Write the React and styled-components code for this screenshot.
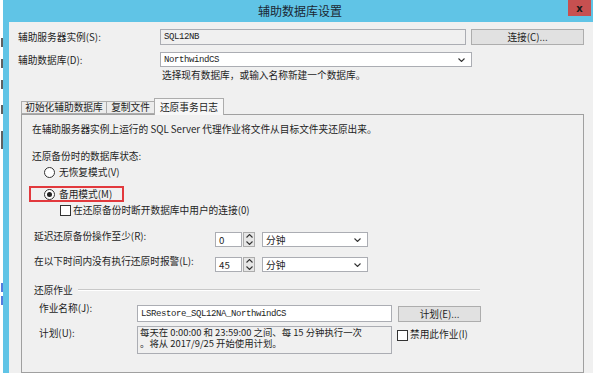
import React from 'react'
import styled, { createGlobalStyle } from 'styled-components'

const FRAME = '#60c4e6'
const FIELD_BORDER = '#abadb3'

const GlobalStyle = createGlobalStyle`
  html, body { margin: 0; padding: 0; background: #fff; }
  body {
    font-family: "Noto Sans CJK SC", "Noto Sans", sans-serif;
    font-size: 9.7px;
    color: #1e1e1e;
  }
  * { box-sizing: border-box; }
`

const Screen = styled.div`
  width: 593px;
  height: 373px;
  overflow: hidden;
  display: flex;
`

/* sliver of the window behind the dialog */
const Behind = styled.div`
  width: 3px;
  flex: none;
  background: #fff;
  display: flex;
  flex-direction: column;
  align-items: flex-end;
`

const Mark = styled.span`
  display: block;
  margin-top: ${p => p.$gap}px;
  width: 2px;
  height: ${p => p.$h || 9}px;
  background: ${p => p.$color || '#3a3a3a'};
  opacity: 0.8;
`

const Window = styled.div`
  flex: 1;
  display: flex;
  flex-direction: column;
  border-left: 6px solid ${FRAME};
`

const TitleBar = styled.div`
  height: 22px;
  flex: none;
  display: flex;
  align-items: flex-start;
  background: ${FRAME};
`

const Title = styled.div`
  margin-left: 249px;
  line-height: 22px;
  font-size: 12px;
  color: #1b2733;
`

const CloseButton = styled.div`
  margin-left: auto;
  margin-right: 2px;
  width: 23px;
  height: 16px;
  background: #c75050;
  display: flex;
  align-items: center;
  justify-content: center;
  font-family: "DejaVu Sans", sans-serif;
  font-weight: bold;
  font-size: 10px;
  color: #1a1a1a;
`

const Body = styled.div`
  flex: 1;
  background: #f0f0f0;
  padding: 7px 0 0 9px;
  display: flex;
  flex-direction: column;
`

const Row = styled.div`
  display: flex;
  align-items: ${p => p.$align || 'center'};
  margin-top: ${p => p.$top || 0}px;
  margin-left: ${p => p.$left || 0}px;
  height: ${p => (p.$h ? `${p.$h}px` : 'auto')};
`

const Label = styled.div`
  width: ${p => p.$w}px;
  flex: none;
  line-height: 12px;
  margin-top: ${p => p.$top || 0}px;
  white-space: nowrap;
`

const TextBox = styled.div`
  width: ${p => p.$w}px;
  height: ${p => p.$h || 16}px;
  margin-top: ${p => p.$top || 0}px;
  flex: none;
  border: 1px solid ${FIELD_BORDER};
  background: ${p => (p.$readOnly ? '#f0f0f0' : '#fff')};
  display: flex;
  align-items: center;
  padding-left: 3px;
  font-family: ${p => (p.$mono ? '"Liberation Mono", monospace' : 'inherit')};
  font-size: ${p => (p.$mono ? '9px' : 'inherit')};
  letter-spacing: ${p => (p.$mono ? '-0.4px' : '0')};
  white-space: nowrap;
`

const Combo = styled(TextBox)`
  justify-content: space-between;
  padding-right: 6px;
`

const UnitCombo = styled(Combo)`
  margin-left: 7px;
`

const Button = styled.div`
  width: ${p => p.$w}px;
  height: 16px;
  margin-left: ${p => p.$left || 0}px;
  margin-top: ${p => p.$top || 0}px;
  flex: none;
  background: #e1e1e1;
  border: 1px solid #adadad;
  display: flex;
  align-items: center;
  justify-content: center;
  white-space: nowrap;
`

const Hint = styled.div`
  margin: 2px 0 0 144px;
  line-height: 12px;
`

const TabArea = styled.div`
  margin: 16px 0 0 3px;
  width: 563px;
  flex: 1;
  display: flex;
  flex-direction: column;
`

const TabStrip = styled.div`
  height: 17px;
  display: flex;
  align-items: flex-end;
  position: relative;
  z-index: 1;
`

const Tab = styled.div`
  width: ${p => p.$w}px;
  height: ${p => (p.$active ? 17 : 13)}px;
  margin-left: ${p => (p.$first ? 0 : -1)}px;
  margin-bottom: ${p => (p.$active ? -1 : 0)}px;
  border: 1px solid #acacac;
  border-bottom: ${p => (p.$active ? 'none' : '1px solid #acacac')};
  background: ${p => (p.$active ? '#f7f7f7' : '#ececec')};
  display: flex;
  align-items: center;
  justify-content: center;
  white-space: nowrap;
  line-height: 11px;
`

const Panel = styled.div`
  flex: 1;
  border: 1px solid #a0a0a0;
  background: #f0f0f0;
  padding: 8px 0 0 10px;
  display: flex;
  flex-direction: column;
`

const Line = styled.div`
  height: 12px;
  line-height: 12px;
  margin-top: ${p => p.$top || 0}px;
  white-space: nowrap;
`

const RadioCircle = styled.span`
  width: 11px;
  height: 11px;
  flex: none;
  border-radius: 50%;
  border: 1px solid #333;
  background: #fff;
  margin-right: 4px;
  display: flex;
  align-items: center;
  justify-content: center;
  &::after {
    content: '';
    width: 5px;
    height: 5px;
    border-radius: 50%;
    background: ${p => (p.$checked ? '#222' : 'transparent')};
  }
`

const Highlight = styled.div`
  margin: 8px 0 0 -3px;
  width: 95px;
  height: 16px;
  border: 2px solid #e2393d;
  padding-left: 13px;
  display: flex;
  align-items: center;
  line-height: 12px;
`

const CheckBox = styled.span`
  width: 11px;
  height: 11px;
  flex: none;
  border: 1px solid #333;
  background: #fff;
  margin-right: 2px;
  margin-top: ${p => p.$top || 0}px;
`

const SpinWrap = styled.div`
  display: flex;
  margin-top: 2px;
`

const SpinButtons = styled.div`
  width: 12px;
  height: 15px;
  margin-left: 1px;
  border: 1px solid #acacac;
  background: #e6e6e6;
  display: flex;
  flex-direction: column;
  justify-content: space-around;
  align-items: center;
`

const GroupHeader = styled.div`
  margin: 12px 0 0 2px;
  width: 446px;
  height: 12px;
  display: flex;
  align-items: center;
  line-height: 12px;
  &::after {
    content: '';
    flex: 1;
    margin-left: 5px;
    border-top: 1px solid #c8c8c8;
    border-bottom: 1px solid #fff;
  }
`

const Schedule = styled.div`
  width: 255px;
  height: 28px;
  flex: none;
  border: 1px solid ${FIELD_BORDER};
  background: #f0f0f0;
  padding: 0 2px;
  font-size: 9.4px;
  line-height: 11px;
  white-space: nowrap;
`

const Chevron = ({ up }) => (
  <svg width="7" height="4" viewBox="0 0 7 4">
    <polyline
      points={up ? '0.5,3.5 3.5,0.5 6.5,3.5' : '0.5,0.5 3.5,3.5 6.5,0.5'}
      fill="none"
      stroke="#333"
      strokeWidth="1.1"
    />
  </svg>
)

const Spinner = ({ value }) => (
  <SpinWrap>
    <TextBox $w={27} $h={15}>{value}</TextBox>
    <SpinButtons>
      <Chevron up />
      <Chevron />
    </SpinButtons>
    <UnitCombo $w={106} $h={15}>
      分钟
      <Chevron />
    </UnitCombo>
  </SpinWrap>
)

const marks = [
  { gap: 38 },
  { gap: 12 },
  { gap: 12 },
  { gap: 16 },
  { gap: 17, h: 18 },
  { gap: 134, color: '#2a5bd7' },
  { gap: 4, color: '#2a5bd7' },
]

export default function App() {
  return (
    <>
      <GlobalStyle />
      <Screen>
        <Behind>
          {marks.map((m, i) => (
            <Mark key={i} $gap={m.gap} $h={m.h} $color={m.color} />
          ))}
        </Behind>
        <Window>
          <TitleBar>
            <Title>辅助数据库设置</Title>
            <CloseButton>x</CloseButton>
          </TitleBar>
          <Body>
            <Row $h={16}>
              <Label $w={142}>辅助服务器实例(S):</Label>
              <TextBox $w={306} $readOnly $mono>SQL12NB</TextBox>
              <Button $w={113} $left={5}>连接(C)...</Button>
            </Row>
            <Row $h={15} $top={7}>
              <Label $w={142}>辅助数据库(D):</Label>
              <Combo $w={312} $h={15} $mono>
                NorthwindCS
                <Chevron />
              </Combo>
            </Row>
            <Hint>选择现有数据库，或输入名称新建一个数据库。</Hint>

            <TabArea>
              <TabStrip>
                <Tab $w={86} $first>初始化辅助数据库</Tab>
                <Tab $w={49}>复制文件</Tab>
                <Tab $w={70} $active>还原事务日志</Tab>
              </TabStrip>
              <Panel>
                <Line>在辅助服务器实例上运行的 SQL Server 代理作业将文件从目标文件夹还原出来。</Line>
                <Line $top={15}>还原备份时的数据库状态:</Line>
                <Row $h={12} $top={4} $left={12}>
                  <RadioCircle />
                  无恢复模式(V)
                </Row>
                <Highlight>
                  <RadioCircle $checked />
                  备用模式(M)
                </Highlight>
                <Row $h={12} $top={2} $left={28}>
                  <CheckBox />
                  在还原备份时断开数据库中用户的连接(0)
                </Row>

                <Row $align="flex-start" $top={14} $left={2}>
                  <Label $w={181}>延迟还原备份操作至少(R):</Label>
                  <Spinner value="0" />
                </Row>
                <Row $align="flex-start" $top={8} $left={2}>
                  <Label $w={181}>在以下时间内没有执行还原时报警(L):</Label>
                  <Spinner value="45" />
                </Row>

                <GroupHeader>还原作业</GroupHeader>
                <Row $align="flex-start" $top={6} $left={7}>
                  <Label $w={98}>作业名称(J):</Label>
                  <TextBox $w={255} $h={17} $top={3} $mono>LSRestore_SQL12NA_NorthwindCS</TextBox>
                  <Button $w={83} $left={6} $top={4}>计划(E)...</Button>
                </Row>
                <Row $align="flex-start" $top={4} $left={7}>
                  <Label $w={98} $top={1}>计划(U):</Label>
                  <Schedule>
                    每天在 0:00:00 和 23:59:00 之间、每 15 分钟执行一次
                    <br />
                    。将从 2017/9/25 开始使用计划。
                  </Schedule>
                  <Row $h={12} $top={2} $left={5}>
                    <CheckBox $top={2} />
                    禁用此作业(I)
                  </Row>
                </Row>
              </Panel>
            </TabArea>
          </Body>
        </Window>
      </Screen>
    </>
  )
}
